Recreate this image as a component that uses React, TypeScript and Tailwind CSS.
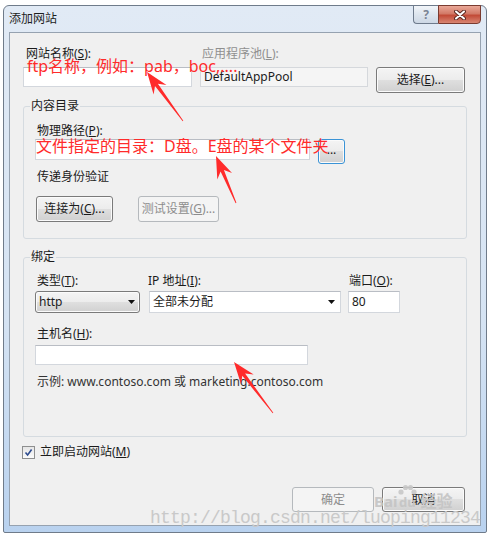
import React from 'react';
import clsx from 'clsx';

const RED = '#ff2b2b';

// tip -> tail, red "annotation" arrows drawn over the dialog
function arrowPoints(tx: number, ty: number, ex: number, ey: number, head = 22, wing = 8) {
  const dx = ex - tx;
  const dy = ey - ty;
  const len = Math.hypot(dx, dy);
  const ux = dx / len;
  const uy = dy / len;
  const nx = -uy;
  const ny = ux;
  const p = (a: number, b: number) =>
    `${(tx + ux * a + nx * b).toFixed(1)},${(ty + uy * a + ny * b).toFixed(1)}`;
  return [p(0, 0), p(head, wing), p(head - 6, 1.8), p(len, 0.4), p(len, -0.4), p(head - 6, -1.8), p(head, -wing)].join(' ');
}

const arrows = [
  [147, 72, 183, 121],
  [216, 156, 236, 203],
  [234, 362, 273, 413],
];

const WinButton: React.FC<{ children: React.ReactNode; className?: string; disabled?: boolean; focused?: boolean }> = ({
  children,
  className,
  disabled,
  focused,
}) => (
  <div
    className={clsx(
      'flex items-center justify-center rounded-[3px] border leading-none',
      disabled
        ? 'border-[#b5b9bd] bg-[#f4f4f4] text-[#8d8d8d]'
        : 'bg-[linear-gradient(#f4f4f4,#ececec_50%,#dfdfdf_50%,#d0d0d0)] text-[#1b1b1b] shadow-[inset_0_0_0_1px_#fbfbfb]',
      !disabled && (focused ? 'border-[#3a93d6] shadow-[inset_0_0_0_1px_#8fd9fa]' : 'border-[#7a7a7a]'),
      className
    )}
  >
    {children}
  </div>
);

const TextBox: React.FC<{ children?: React.ReactNode; className?: string }> = ({ children, className }) => (
  <div className={clsx('flex items-center border border-[#d3d7dd] border-t-[#b9bdc4] bg-white pl-[3px]', className)}>
    {children}
  </div>
);

const DownArrow = () => (
  <svg width="7" height="4" viewBox="0 0 7 4">
    <polygon points="0,0 7,0 3.5,4" fill="#111" />
  </svg>
);

const Label: React.FC<{ children: React.ReactNode; className?: string }> = ({ children, className }) => (
  <div className={clsx('leading-[16px] whitespace-nowrap', className)}>{children}</div>
);

export default function App() {
  return (
    <div className="relative h-[537px] w-[491px] overflow-hidden bg-white font-['Noto_Sans','Noto_Sans_CJK_SC',sans-serif] text-[12px] text-[#1b1b1b]">
      {/* window frame */}
      <div className="ml-[3px] mt-[5px] flex h-[528px] w-[484px] flex-col rounded-t-[6px] rounded-b-[2px] border border-[#6f7b8a] bg-[linear-gradient(#e1eaf5,#d5e3f3_60%,#b9d2ef)]">
        {/* title bar */}
        <div className="flex h-[26px] items-start justify-between">
          <div className="pl-[5px] pt-[5px] leading-[16px] text-[#1e1e1e]">添加网站</div>
          <div className="-mt-px mr-[5px] flex">
            <div className="flex h-[19px] w-[25px] items-center justify-center rounded-bl-[4px] border border-r-0 border-[#6e7b8c] bg-[linear-gradient(#f2f5f9,#dde5ee_50%,#cdd8e5)] text-[12px] font-bold leading-none text-[#7a8494]">
              ?
            </div>
            <div className="flex h-[19px] w-[43px] items-center justify-center rounded-br-[4px] border border-[#7a3b30] bg-[linear-gradient(#eaa898,#d27a67_45%,#c24b37_55%,#d88572)]">
              <svg width="12" height="10" viewBox="0 0 12 10">
                <path d="M2 1.5 L10 8.5 M10 1.5 L2 8.5" stroke="#5b2a22" strokeWidth="4" strokeLinecap="round" />
                <path d="M2 1.5 L10 8.5 M10 1.5 L2 8.5" stroke="#ffffff" strokeWidth="2" strokeLinecap="round" />
              </svg>
            </div>
          </div>
        </div>

        {/* client area */}
        <div className="mb-[6px] ml-[5px] flex w-[472px] flex-1 flex-col border border-[#96a2b0] bg-[#f0f0f0] pl-[13px] pt-[13px]">
          {/* site name / app pool */}
          <div className="flex items-start">
            <div className="flex w-[169px] flex-col">
              <Label className="ml-[3px]">
                网站名称(<u>S</u>):
              </Label>
              <TextBox className="mt-[5px] h-[20px]" />
            </div>
            <div className="ml-[8px] flex w-[168px] flex-col">
              <Label className="ml-[2px] text-[#8f8f8f]">
                应用程序池(<u>L</u>):
              </Label>
              <div className="mt-[5px] flex h-[20px] items-center border border-[#d5d8dc] bg-[#f5f5f5] pl-[3px]">DefaultAppPool</div>
            </div>
            <WinButton className="ml-[8px] mt-[21px] h-[26px] w-[89px]">
              选择(<u>E</u>)...
            </WinButton>
          </div>

          {/* content directory */}
          <fieldset className="mt-[5px] w-[444px] rounded-[3px] border border-[#d5dbe0] pb-[16px]">
            <legend className="ml-[6px] px-px leading-[16px]">内容目录</legend>
            <div className="flex flex-col pl-[11px]">
              <Label className="ml-[2px] mt-[9px]">
                物理路径(<u>P</u>):
              </Label>
              <div className="flex items-start">
                <TextBox className="h-[21px] w-[275px]" />
                <WinButton focused className="ml-[8px] h-[25px] w-[27px] pb-[4px]">
                  ...
                </WinButton>
              </div>
              <Label className="ml-[2px] mt-[5px]">传递身份验证</Label>
              <div className="mt-[11px] flex">
                <WinButton className="ml-px h-[26px] w-[77px]">
                  连接为(<u>C</u>)...
                </WinButton>
                <WinButton disabled className="ml-[25px] h-[26px] w-[81px]">
                  测试设置(<u>G</u>)...
                </WinButton>
              </div>
            </div>
          </fieldset>

          {/* binding */}
          <fieldset className="mt-[10px] w-[444px] rounded-[3px] border border-[#d5dbe0] pb-[46px]">
            <legend className="ml-[6px] px-px leading-[16px]">绑定</legend>
            <div className="flex flex-col pl-[11px]">
              <div className="mt-[8px] flex items-start">
                <div className="flex w-[105px] flex-col">
                  <Label className="ml-[2px]">
                    类型(<u>T</u>):
                  </Label>
                  <div className="mt-[2px] flex h-[22px] items-center justify-between rounded-[3px] border border-[#7a7a7a] bg-[linear-gradient(#f4f4f4,#ececec_50%,#dfdfdf_50%,#d0d0d0)] pl-[3px] pr-[4px] shadow-[inset_0_0_0_1px_#fbfbfb]">
                    <span>http</span>
                    <DownArrow />
                  </div>
                </div>
                <div className="ml-[9px] flex w-[192px] flex-col">
                  <Label className="-ml-px">
                    IP 地址(<u>I</u>):
                  </Label>
                  <div className="mt-[2px] flex h-[22px] items-center justify-between border border-[#d3d7dd] border-t-[#b9bdc4] bg-white pl-[3px] pr-[5px]">
                    <span>全部未分配</span>
                    <DownArrow />
                  </div>
                </div>
                <div className="ml-[7px] flex w-[52px] flex-col">
                  <Label className="ml-px">
                    端口(<u>O</u>):
                  </Label>
                  <TextBox className="mt-[2px] h-[22px]">80</TextBox>
                </div>
              </div>
              <Label className="ml-[2px] mt-[13px]">
                主机名(<u>H</u>):
              </Label>
              <TextBox className="mt-[3px] h-[20px] w-[273px]" />
              <Label className="ml-[2px] mt-[9px] text-[#333]">示例: www.contoso.com 或 marketing.contoso.com</Label>
            </div>
          </fieldset>

          {/* start immediately */}
          <div className="-ml-px mt-[7px] flex items-center leading-[16px]">
            <div className="flex h-[13px] w-[13px] items-center justify-center border border-[#8e8f8f] bg-[linear-gradient(#e6e6e6,#fbfbfb)]">
              <svg width="9" height="9" viewBox="0 0 9 9">
                <path d="M1.5 4.5 L3.6 7 L7.6 1.6" stroke="#2e4c8f" strokeWidth="1.6" fill="none" />
              </svg>
            </div>
            <span className="ml-[5px]">
              立即启动网站(<u>M</u>)
            </span>
          </div>

          {/* dialog buttons */}
          <div className="mt-[27px] flex justify-end pr-[15px]">
            <WinButton disabled className="h-[25px] w-[82px]">
              确定
            </WinButton>
            <WinButton className="ml-[8px] h-[25px] w-[83px] border-[#3a3a3a]">取消</WinButton>
          </div>
        </div>
      </div>

      {/* red annotations */}
      <div className="absolute left-[27px] top-[58px] whitespace-nowrap text-[16px] leading-none text-[#ff2b2b]">
        ftp名称，例如：pab，boc,....
      </div>
      <div className="absolute left-[36px] top-[138px] whitespace-nowrap text-[16px] leading-none text-[#ff2b2b]">
        文件指定的目录：D盘。E盘的某个文件夹
      </div>
      <svg className="pointer-events-none absolute left-0 top-0" width="491" height="537" viewBox="0 0 491 537">
        {arrows.map(([tx, ty, ex, ey], i) => (
          <polygon key={i} points={arrowPoints(tx, ty, ex, ey)} fill={RED} />
        ))}
      </svg>

      {/* watermarks */}
      <div className="pointer-events-none absolute left-[374px] top-[484px] flex items-end text-[#c4c4c4] opacity-90">
        <span className="text-[15px] font-bold leading-none">Bai</span>
        <div className="flex flex-col items-center">
          <svg width="20" height="12" viewBox="0 0 20 12">
            <circle cx="4" cy="8" r="2.6" fill="#c8c8c8" />
            <circle cx="8.5" cy="3.5" r="2.6" fill="#c8c8c8" />
            <circle cx="13.5" cy="3.5" r="2.6" fill="#c8c8c8" />
            <circle cx="17" cy="8" r="2.6" fill="#c8c8c8" />
          </svg>
          <span className="text-[13px] font-bold leading-none">du</span>
        </div>
        <span className="ml-[3px] text-[16px] font-bold leading-none">经验</span>
      </div>
      <div className="pointer-events-none absolute left-[150px] top-[509px] whitespace-nowrap font-['Liberation_Mono',monospace] text-[18px] leading-none tracking-[-0.8px] text-[#c9c9c9]">
        http://blog.csdn.net/luoping11234
      </div>
    </div>
  );
}
